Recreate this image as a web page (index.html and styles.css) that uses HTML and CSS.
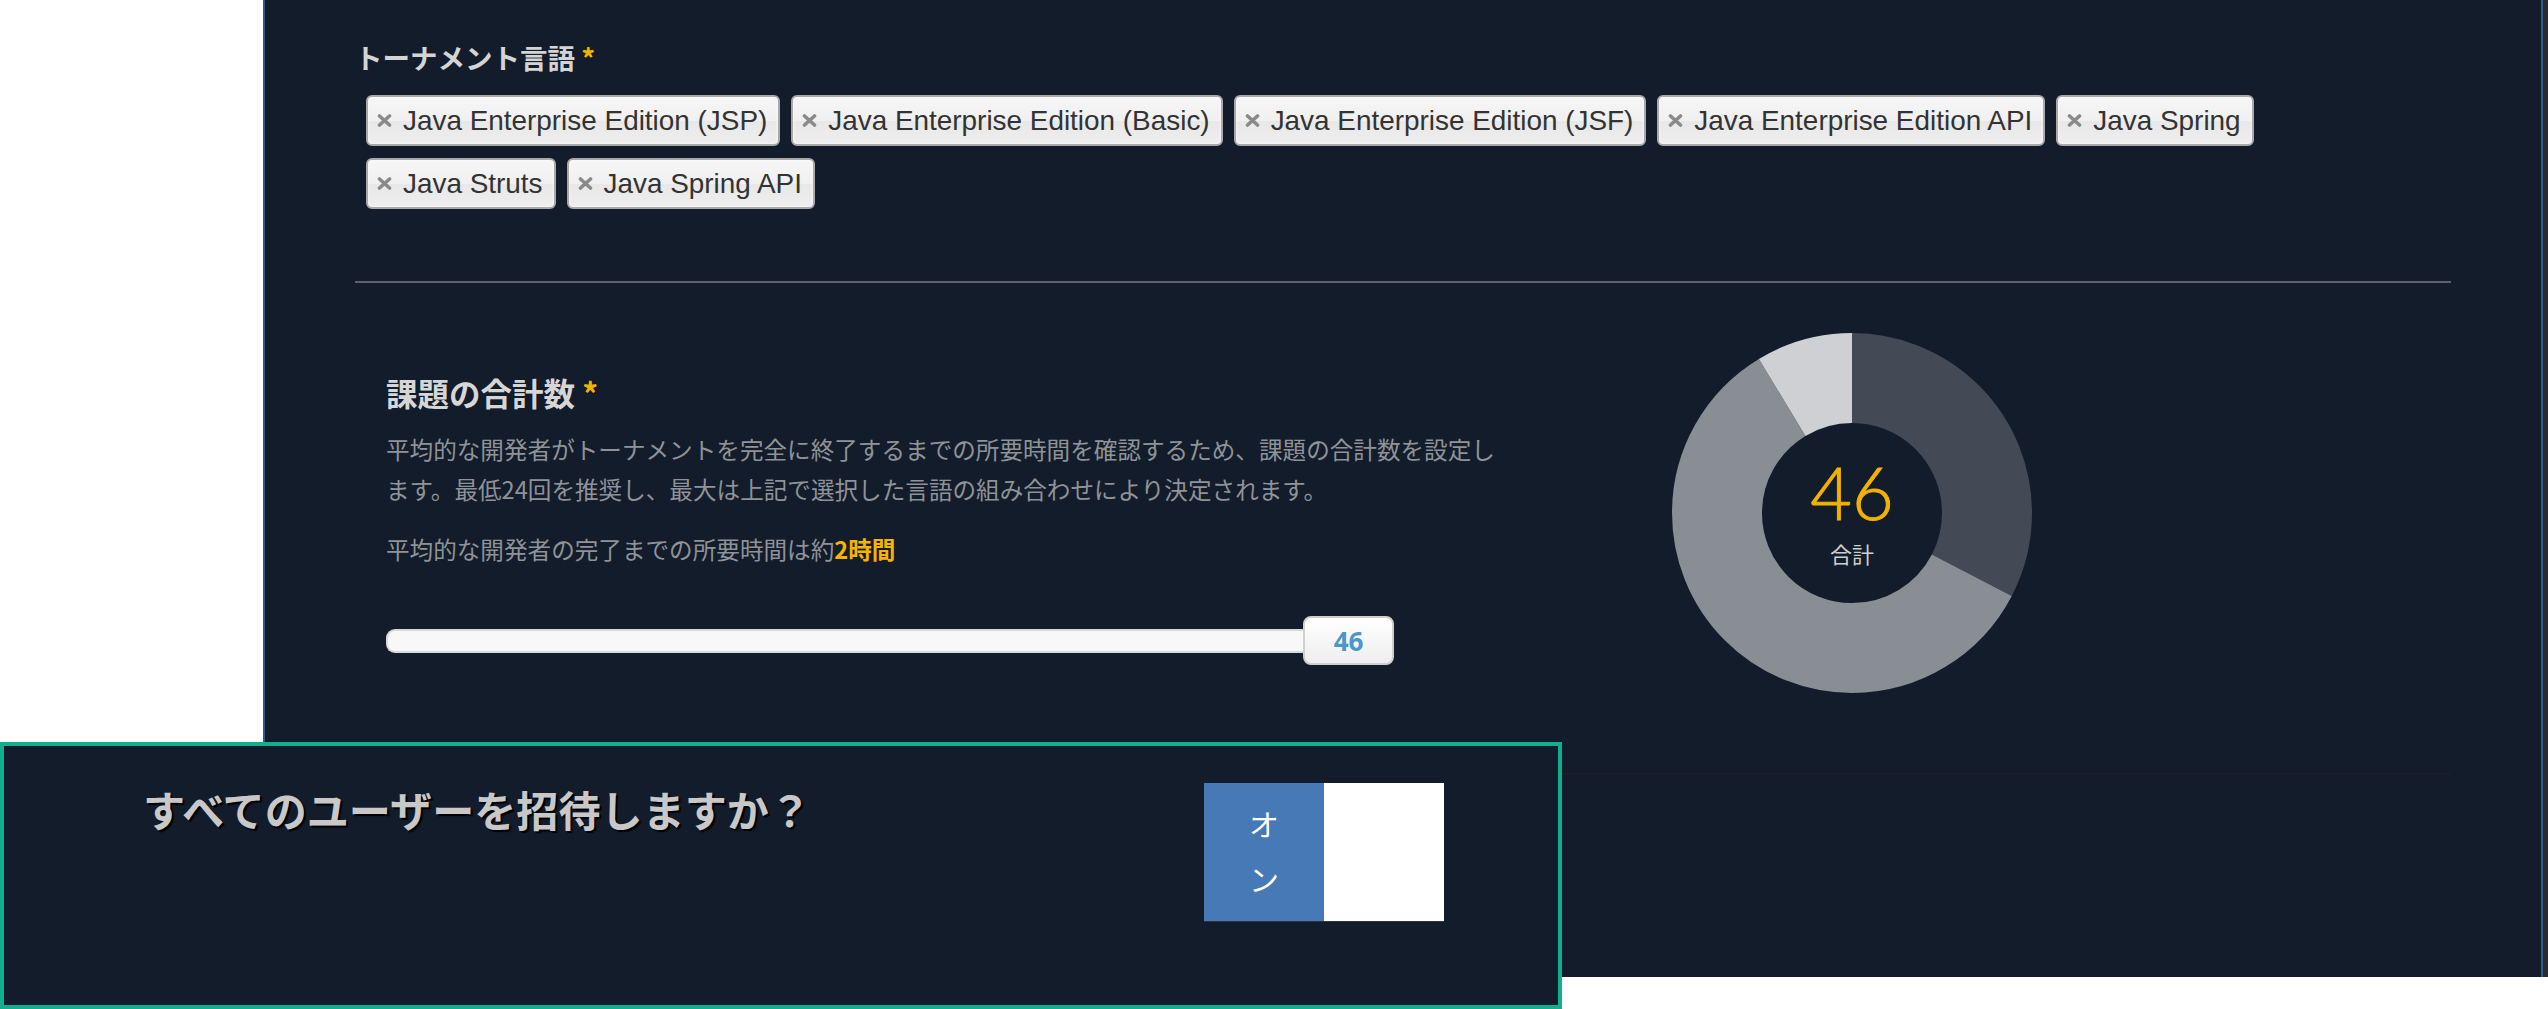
FILE: index.html
```html
<!DOCTYPE html>
<html lang="ja">
<head>
<meta charset="utf-8">
<title>トーナメント設定</title>
<link rel="stylesheet" href="styles.css">
</head>
<body>
<div class="page">
  <div class="gutter"></div>
  <main class="panel">
    <h2 class="label">トーナメント言語 <span class="req">*</span></h2>
    <div class="tags">
      <span class="tag"><svg class="x" viewBox="0 0 15 13"><path d="M2.5 2 L12.5 11 M12.5 2 L2.5 11"/></svg>Java Enterprise Edition (JSP)</span>
      <span class="tag"><svg class="x" viewBox="0 0 15 13"><path d="M2.5 2 L12.5 11 M12.5 2 L2.5 11"/></svg>Java Enterprise Edition (Basic)</span>
      <span class="tag"><svg class="x" viewBox="0 0 15 13"><path d="M2.5 2 L12.5 11 M12.5 2 L2.5 11"/></svg>Java Enterprise Edition (JSF)</span>
      <span class="tag"><svg class="x" viewBox="0 0 15 13"><path d="M2.5 2 L12.5 11 M12.5 2 L2.5 11"/></svg>Java Enterprise Edition API</span>
      <span class="tag"><svg class="x" viewBox="0 0 15 13"><path d="M2.5 2 L12.5 11 M12.5 2 L2.5 11"/></svg>Java Spring</span>
      <span class="tag"><svg class="x" viewBox="0 0 15 13"><path d="M2.5 2 L12.5 11 M12.5 2 L2.5 11"/></svg>Java Struts</span>
      <span class="tag"><svg class="x" viewBox="0 0 15 13"><path d="M2.5 2 L12.5 11 M12.5 2 L2.5 11"/></svg>Java Spring API</span>
    </div>
    <div class="rule"></div>
    <section class="count">
      <div class="count-left">
        <h2 class="count-title">課題の合計数 <span class="req">*</span></h2>
        <p class="desc">平均的な開発者がトーナメントを完全に終了するまでの所要時間を確認するため、課題の合計数を設定します。最低24回を推奨し、最大は上記で選択した言語の組み合わせにより決定されます。</p>
        <p class="est">平均的な開発者の完了までの所要時間は約<b>2時間</b></p>
        <div class="slider">
          <div class="track"></div>
          <div class="value">46</div>
        </div>
      </div>
      <div class="donut">
        <svg class="ring" viewBox="0 0 360 360">
          <g transform="rotate(-90 180 180)">
            <circle cx="180" cy="180" r="135" stroke="#434a55" stroke-dasharray="276.6 848.23" stroke-dashoffset="0"/>
            <circle cx="180" cy="180" r="135" stroke="#898d94" stroke-dasharray="497.9 848.23" stroke-dashoffset="-276.6"/>
            <circle cx="180" cy="180" r="135" stroke="#cfd0d4" stroke-dasharray="73.73 848.23" stroke-dashoffset="-774.5"/>
          </g>
        </svg>
        <div class="donut-label">
          <span class="donut-num">46</span>
          <span class="donut-sub">合計</span>
        </div>
      </div>
    </section>
    <div class="rule2"></div>
  </main>
  <div class="strip"></div>
</div>
<div class="invite">
  <h2 class="invite-title">すべてのユーザーを招待しますか？</h2>
  <div class="toggle">
    <div class="on"><span>オン</span></div>
    <div class="off"></div>
  </div>
</div>
</body>
</html>
```

FILE: styles.css
```css
body {
  margin: 0;
  background: #ffffff;
  font-family: "Noto Sans CJK JP", sans-serif;
}

.page {
  display: flex;
  align-items: flex-start;
}

.gutter {
  width: 263px;
  flex: none;
}

.panel {
  width: 2280px;
  height: 977px;
  flex: none;
  box-sizing: border-box;
  background: #131c2b;
  border-left: 2px solid #2d5c8c;
  border-right: 2px solid #2d5c8c;
  padding: 41px 90px 0 90px;
}

.strip {
  width: 5px;
  height: 977px;
  flex: none;
  background: #2b2b2b;
}

.label {
  margin: 0;
  font-size: 27.5px;
  line-height: 32px;
  font-weight: 700;
  color: #d4d4d4;
}

.req {
  color: #f0b400;
}

.tags {
  display: flex;
  flex-wrap: wrap;
  gap: 12px 11px;
  margin-top: 22px;
  padding-left: 11px;
  width: 1995px;
  box-sizing: border-box;
}

.tag {
  display: flex;
  align-items: center;
  height: 51px;
  box-sizing: border-box;
  padding: 0 11px 0 9px;
  border: 2px solid #a9a9a9;
  border-radius: 6px;
  background: linear-gradient(#f6f6f6 0%, #f0f0f0 50%, #e8e8e8 52%, #eeeeee 100%);
  box-shadow: inset 0 0 3px #ffffff;
  font-family: "Liberation Sans", Arial, sans-serif;
  font-size: 27.9px;
  color: #333333;
  white-space: nowrap;
}

.x {
  width: 15px;
  height: 13px;
  margin-right: 11px;
  flex: none;
}

.x path {
  stroke: #8a8a8a;
  stroke-width: 3.6;
  stroke-linecap: round;
  fill: none;
}

.rule {
  height: 2px;
  background: #5d636b;
  margin-top: 72px;
}

.count {
  display: flex;
  align-items: flex-start;
}

.count-left {
  width: 1125px;
  flex: none;
  margin-left: 31px;
  padding-top: 91px;
}

.count-title {
  margin: 0;
  font-size: 31.5px;
  line-height: 36px;
  font-weight: 700;
  color: #d6d6d6;
}

.desc,
.est {
  margin: 0;
  font-size: 23.6px;
  line-height: 40px;
  color: #8f9398;
}

.desc {
  margin-top: 19px;
}

.est {
  margin-top: 20px;
}

.est b {
  color: #f5b400;
  font-weight: 700;
}

.slider {
  display: flex;
  align-items: center;
  margin-top: 47px;
}

.track {
  width: 918px;
  height: 24px;
  box-sizing: border-box;
  border: 2px solid #d9d9d9;
  border-right: none;
  border-radius: 9px 0 0 9px;
  background: #f8f8f8;
}

.value {
  width: 91px;
  height: 49px;
  box-sizing: border-box;
  margin-left: -1px;
  border: 2px solid #cfcfcf;
  border-radius: 8px;
  background: linear-gradient(#ffffff, #eeeeee);
  display: flex;
  align-items: center;
  justify-content: center;
  font-family: "Open Sans", sans-serif;
  font-weight: 700;
  font-size: 26px;
  color: #4a97c8;
}

.donut {
  position: relative;
  width: 360px;
  height: 360px;
  flex: none;
  margin-left: 161px;
  margin-top: 50px;
}

.ring {
  display: block;
  width: 360px;
  height: 360px;
}

.ring circle {
  fill: none;
  stroke-width: 90;
}

.donut-label {
  position: absolute;
  inset: 0;
  display: flex;
  flex-direction: column;
  align-items: center;
  justify-content: center;
  padding-bottom: 8px;
  box-sizing: border-box;
}

.donut-num {
  font-family: Lato, "Open Sans", sans-serif;
  font-weight: 300;
  font-size: 72px;
  line-height: 87px;
  color: #f2b200;
  -webkit-text-stroke: 0.9px #f2b200;
}

.donut-sub {
  margin-top: 1px;
  font-size: 22px;
  line-height: 32px;
  color: #cfcfcf;
}

.rule2 {
  height: 2px;
  background: #1a1e25;
  margin-top: 80px;
}

.invite {
  position: absolute;
  left: 0;
  top: 742px;
  width: 1562px;
  height: 267px;
  box-sizing: border-box;
  border: 4px solid #10b08f;
  background: #131c2b;
  display: flex;
  align-items: flex-start;
  padding: 37px 114px 0 139px;
}

.invite-title {
  margin: 2px 0 0 0;
  font-size: 42.1px;
  line-height: 48px;
  font-weight: 700;
  color: #c8c8c8;
  text-shadow: 2px 2px 1px #000000;
}

.toggle {
  margin-left: auto;
  display: flex;
  height: 138px;
  box-shadow: 0 1px 0 #2e3540;
}

.on {
  width: 120px;
  background: #4679b5;
  color: #ffffff;
  display: flex;
  align-items: center;
  justify-content: center;
  padding-bottom: 3px;
  box-sizing: border-box;
}

.on span {
  width: 1em;
  font-size: 30px;
  line-height: 55px;
  text-align: center;
}

.off {
  width: 120px;
  background: #ffffff;
}
```
